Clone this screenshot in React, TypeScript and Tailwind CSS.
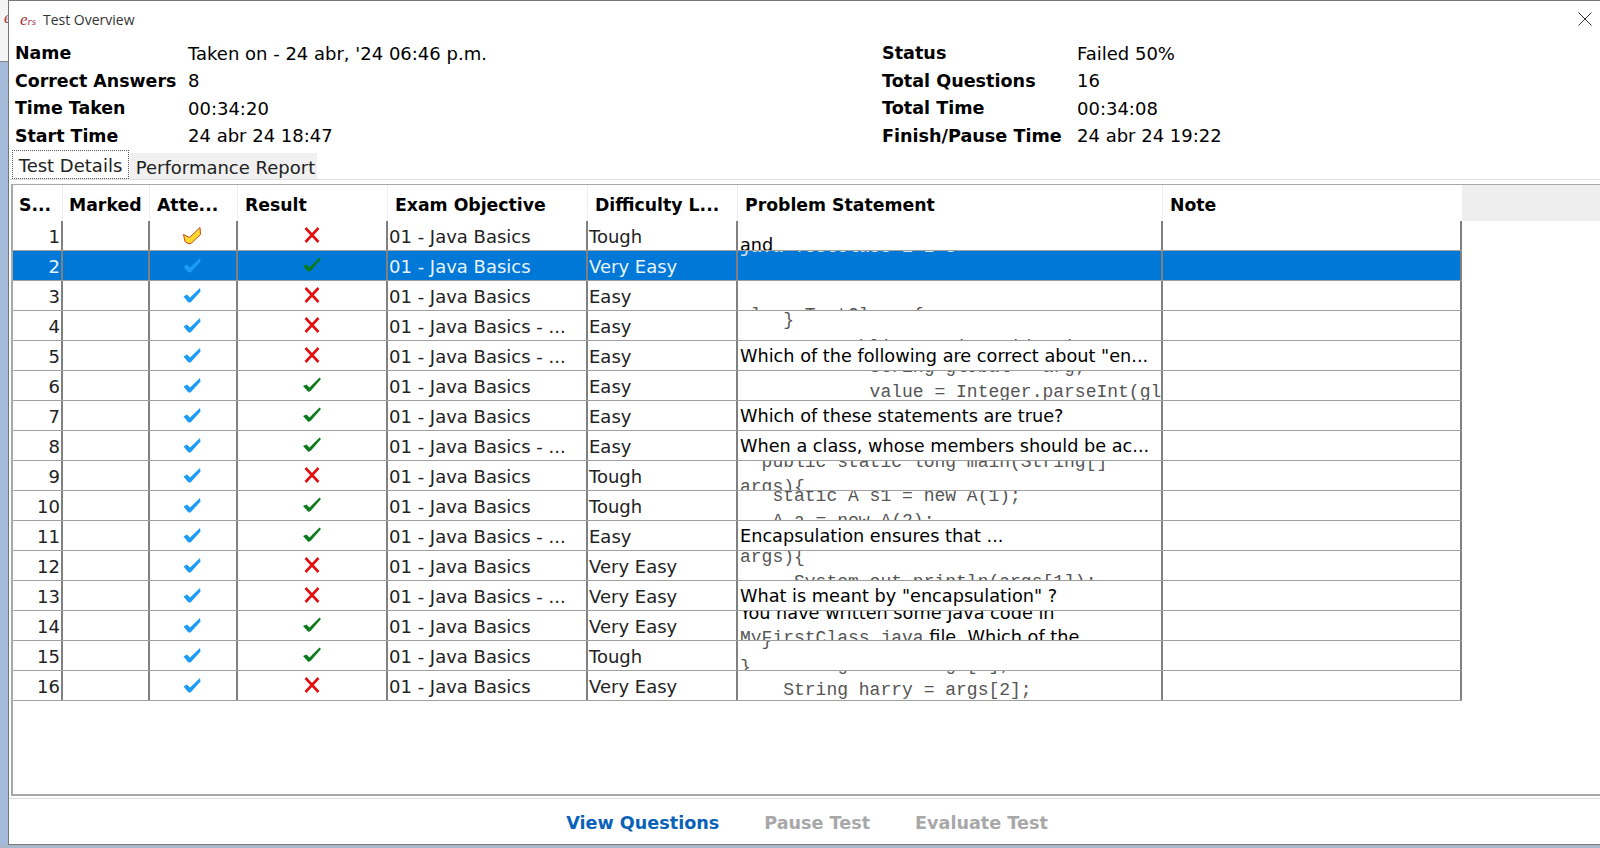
import React from 'react';

const font = { fontFamily: '"DejaVu Sans", sans-serif' };

type Row = {
  n: number;
  attempted: 'yellow' | 'blue';
  ok: boolean;
  objective: string;
  difficulty: string;
  statement: React.ReactNode;
};

const mono = 'font-["Liberation_Mono",monospace] text-[18px] leading-[25px] whitespace-pre text-[#555]';
const sans = 'text-[17.7px] leading-[25px] whitespace-pre text-black';

const Plain = ({ text }: { text: string }) => (
  <div className="h-[29px] leading-[31px] pl-[2px] text-[17.7px] text-black whitespace-pre">{text}</div>
);

const rows: Row[] = [
  {
    n: 1, attempted: 'yellow', ok: false, objective: '01 - Java Basics', difficulty: 'Tough',
    statement: <div className={`${sans} mt-[12px] pl-[2px]`}>and</div>,
  },
  {
    n: 2, attempted: 'blue', ok: true, objective: '01 - Java Basics', difficulty: 'Very Easy',
    statement: <div className={`${mono} -mt-[16px] pl-[2px] !text-[#d8e8f8]`}>java TestClass 1 2 3</div>,
  },
  {
    n: 3, attempted: 'blue', ok: false, objective: '01 - Java Basics', difficulty: 'Easy',
    statement: <div className={`${mono} mt-[22px] pl-[2px]`}>class TestClass {'{'}</div>,
  },
  {
    n: 4, attempted: 'blue', ok: false, objective: '01 - Java Basics - ...', difficulty: 'Easy',
    statement: (
      <div className="-mt-[3px] pl-[2px]">
        <div className={mono}>{'    }'}</div>
        <div className={`${mono} mt-[2px]`}>{'         public static void main'}</div>
      </div>
    ),
  },
  {
    n: 5, attempted: 'blue', ok: false, objective: '01 - Java Basics - ...', difficulty: 'Easy',
    statement: <Plain text={'Which of the following are correct about "en...'} />,
  },
  {
    n: 6, attempted: 'blue', ok: true, objective: '01 - Java Basics', difficulty: 'Easy',
    statement: (
      <div className="-mt-[16px] pl-[2px]">
        <div className={mono}>{'            String global = arg;'}</div>
        <div className={mono}>{'            value = Integer.parseInt(global);'}</div>
      </div>
    ),
  },
  {
    n: 7, attempted: 'blue', ok: true, objective: '01 - Java Basics', difficulty: 'Easy',
    statement: <Plain text="Which of these statements are true?" />,
  },
  {
    n: 8, attempted: 'blue', ok: true, objective: '01 - Java Basics - ...', difficulty: 'Easy',
    statement: <Plain text="When a class, whose members should be ac..." />,
  },
  {
    n: 9, attempted: 'blue', ok: false, objective: '01 - Java Basics', difficulty: 'Tough',
    statement: (
      <div className="-mt-[11px] pl-[2px]">
        <div className={mono}>{'  public static long main(String[]'}</div>
        <div className={mono}>args){'{'}</div>
      </div>
    ),
  },
  {
    n: 10, attempted: 'blue', ok: true, objective: '01 - Java Basics', difficulty: 'Tough',
    statement: (
      <div className="-mt-[7px] pl-[2px]">
        <div className={mono}>{'   static A s1 = new A(1);'}</div>
        <div className={mono}>{'   A a = new A(2);'}</div>
      </div>
    ),
  },
  {
    n: 11, attempted: 'blue', ok: true, objective: '01 - Java Basics - ...', difficulty: 'Easy',
    statement: <Plain text="Encapsulation ensures that ..." />,
  },
  {
    n: 12, attempted: 'blue', ok: false, objective: '01 - Java Basics', difficulty: 'Very Easy',
    statement: (
      <div className="-mt-[6px] pl-[2px]">
        <div className={mono}>args){'{'}</div>
        <div className={mono}>{'     System.out.println(args[1]);'}</div>
      </div>
    ),
  },
  {
    n: 13, attempted: 'blue', ok: false, objective: '01 - Java Basics - ...', difficulty: 'Very Easy',
    statement: <Plain text={'What is meant by "encapsulation" ?'} />,
  },
  {
    n: 14, attempted: 'blue', ok: true, objective: '01 - Java Basics', difficulty: 'Very Easy',
    statement: (
      <div className="-mt-[10px] pl-[2px]">
        <div className={sans}>You have written some Java code in</div>
        <div className={`${sans} mt-[-1px]`}>
          <span className={mono}>MyFirstClass.java</span> file. Which of the
        </div>
      </div>
    ),
  },
  {
    n: 15, attempted: 'blue', ok: true, objective: '01 - Java Basics', difficulty: 'Tough',
    statement: (
      <div className="-mt-[13px] pl-[2px]">
        <div className={mono}>{'  }'}</div>
        <div className={`${mono} mt-[2px]`}>{'}'}</div>
      </div>
    ),
  },
  {
    n: 16, attempted: 'blue', ok: false, objective: '01 - Java Basics', difficulty: 'Very Easy',
    statement: (
      <div className="-mt-[18px] pl-[2px]">
        <div className={mono}>{'    String tom = args[1];'}</div>
        <div className={mono}>{'    String harry = args[2];'}</div>
      </div>
    ),
  },
];

const BlueCheck = () => (
  <svg width="20" height="20" viewBox="0 0 20 20" className="block">
    <path d="M1.5 10.5 L5 8.5 L8 11.5 L18 2 L18.5 5.5 L9 16 Q7.5 17 6 16 Z" fill="#1c9cf4" />
  </svg>
);

const YellowCheck = () => (
  <svg width="20" height="20" viewBox="0 0 20 20" className="block">
    <path
      d="M1.5 8.5 L7.5 11.5 L18 1.5 L18.5 8.5 L9.5 17 Q8 18.5 6 17.5 L3 15.5 Z"
      fill="#ffd92e"
      stroke="#d0431c"
      strokeWidth="1"
      strokeLinejoin="round"
    />
  </svg>
);

const CrossIcon = () => (
  <svg width="16" height="16" viewBox="0 0 16 16" className="block">
    <path d="M1.5 1 L14.5 15 M14.5 1 L1.5 15" stroke="#e01010" strokeWidth="2.6" fill="none" />
  </svg>
);

const GreenCheck = () => (
  <svg width="20" height="20" viewBox="0 0 20 20" className="block">
    <path d="M1 11 L4.5 9.5 L7.5 12.5 L17.5 2.5 L19 4 L9 15.5 L6.5 17 Z" fill="#0b7a1a" />
  </svg>
);

const InfoRow = ({ label, value, right }: { label: string; value: string; right?: boolean }) => (
  <div className="flex h-[27.5px] items-center text-[18px] text-black">
    <span className={right ? 'w-[195px] font-bold text-[17.6px]' : 'w-[173px] font-bold text-[17.4px]'}>{label}</span>
    <span className="whitespace-pre">{value}</span>
  </div>
);

export default function App() {
  return (
    <div className="flex flex-col w-[1600px] h-[848px] overflow-hidden bg-white" style={font}>
      <div className="flex flex-1 min-h-0">
        {/* what shows of the window behind */}
        <div className="w-[8px] flex flex-col shrink-0">
          <div className="h-[62px] bg-[#f4f4f4] border-b border-[#888] overflow-hidden">
            <div className="mt-[6px] ml-[4px] text-[16px] italic text-[#a33] font-['Liberation_Serif',serif]">e</div>
          </div>
          <div className="flex-1 bg-[#a3bbd8]" />
        </div>

        {/* dialog */}
        <div className="flex-1 flex flex-col min-w-0 border-l border-t border-b border-[#777] bg-white">
          <div className="h-[38.5px] flex items-center pl-[11px] pr-[8px] pb-[2px] shrink-0">
            <span className="w-[23px] italic text-[#a8323c] font-['Liberation_Serif',serif] whitespace-pre">
              <span className="text-[17px]">e</span>
              <span className="text-[11px]">rs</span>
            </span>
            <span className="text-[14px] text-[#333] font-['Open_Sans',sans-serif]">Test Overview</span>
            <svg width="14" height="14" viewBox="0 0 14 14" className="ml-auto block">
              <path d="M0.5 0.5 L13.5 13.5 M13.5 0.5 L0.5 13.5" stroke="#333" strokeWidth="1" fill="none" />
            </svg>
          </div>

          <div className="flex pl-[6px] shrink-0">
            <div className="w-[867px]">
              <InfoRow label="Name" value="Taken on - 24 abr, '24 06:46 p.m." />
              <InfoRow label="Correct Answers" value="8" />
              <InfoRow label="Time Taken" value="00:34:20" />
              <InfoRow label="Start Time" value="24 abr 24 18:47" />
            </div>
            <div>
              <InfoRow right label="Status" value="Failed 50%" />
              <InfoRow right label="Total Questions" value="16" />
              <InfoRow right label="Total Time" value="00:34:08" />
              <InfoRow right label="Finish/Pause Time" value="24 abr 24 19:22" />
            </div>
          </div>

          {/* tabs */}
          <div className="flex items-end h-[30.5px] pl-[3px] border-b border-[#ddd] shrink-0">
            <div className="h-[29px] w-[117px] flex items-center justify-center pt-[2px] text-[18px] text-[#222] border border-dotted border-[#555]">
              Test Details
            </div>
            <div className="h-[26px] w-[187px] ml-[1px] flex items-center justify-center pt-[2px] pl-[4px] text-[18px] text-[#222] bg-[#f0f0f0]">
              Performance Report
            </div>
          </div>

          {/* table frame */}
          <div className="mt-[4px] ml-[2px] flex-1 min-h-0 border-l-2 border-t border-b-2 border-[#a8a8a8] overflow-hidden">
            <div className="flex h-[36px] bg-[#eeeeee] text-[17.3px] font-bold text-black">
              <div className="w-[50px] bg-white border-r border-[#eee] pl-[6px] leading-[40px]">S...</div>
              <div className="w-[87px] bg-white border-r border-[#eee] pl-[6px] leading-[40px]">Marked</div>
              <div className="w-[88px] bg-white border-r border-[#eee] pl-[7px] leading-[40px]">Atte...</div>
              <div className="w-[150px] bg-white border-r border-[#eee] pl-[7px] leading-[40px]">Result</div>
              <div className="w-[200px] bg-white border-r border-[#eee] pl-[7px] leading-[40px]">Exam Objective</div>
              <div className="w-[150px] bg-white border-r border-[#eee] pl-[7px] leading-[40px]">Difficulty L...</div>
              <div className="w-[425px] bg-white border-r border-[#eee] pl-[7px] leading-[40px]">Problem Statement</div>
              <div className="w-[299px] bg-white pl-[7px] leading-[40px]">Note</div>
            </div>
            {rows.map((row) => {
              const selected = row.n === 2;
              const cell = 'h-full border-r-2 border-[#808080] shrink-0';
              return (
                <div
                  key={row.n}
                  className={`flex h-[30px] w-[1449px] border-b border-[#a0a0a0] text-[18px] ${selected ? 'bg-[#0078d7] text-[#e8f4ff]' : 'text-[#222]'}`}
                >
                  <div className={`${cell} w-[50px] text-right pr-[1px] leading-[31px]`}>{row.n}</div>
                  <div className={`${cell} w-[87px]`} />
                  <div className={`${cell} w-[88px] flex items-center justify-center pr-[2px]`}>
                    {row.attempted === 'yellow' ? <YellowCheck /> : <BlueCheck />}
                  </div>
                  <div className={`${cell} w-[150px] flex items-center justify-center pr-[1px] pb-[1px]`}>
                    {row.ok ? <GreenCheck /> : <CrossIcon />}
                  </div>
                  <div className={`${cell} w-[200px] pl-[1px] leading-[31px] whitespace-pre`}>{row.objective}</div>
                  <div className={`${cell} w-[150px] pl-[1px] leading-[31px]`}>{row.difficulty}</div>
                  <div className={`${cell} w-[425px] overflow-hidden`}>{row.statement}</div>
                  <div className="h-full w-[299px] border-r-2 border-[#808080]" />
                </div>
              );
            })}
          </div>

          {/* footer actions */}
          <div className="mt-[2px] h-[46px] border-t border-[#ddd] flex items-center justify-center gap-[45px] pt-[3px] pl-[5px] text-[17.6px] font-bold shrink-0">
            <span className="text-[#0a62b8]">View Questions</span>
            <span className="text-[#a8a8a8]">Pause Test</span>
            <span className="text-[#a8a8a8]">Evaluate Test</span>
          </div>
        </div>
      </div>
      <div className="h-[3px] bg-[#a8b8cc] shrink-0" />
    </div>
  );
}
